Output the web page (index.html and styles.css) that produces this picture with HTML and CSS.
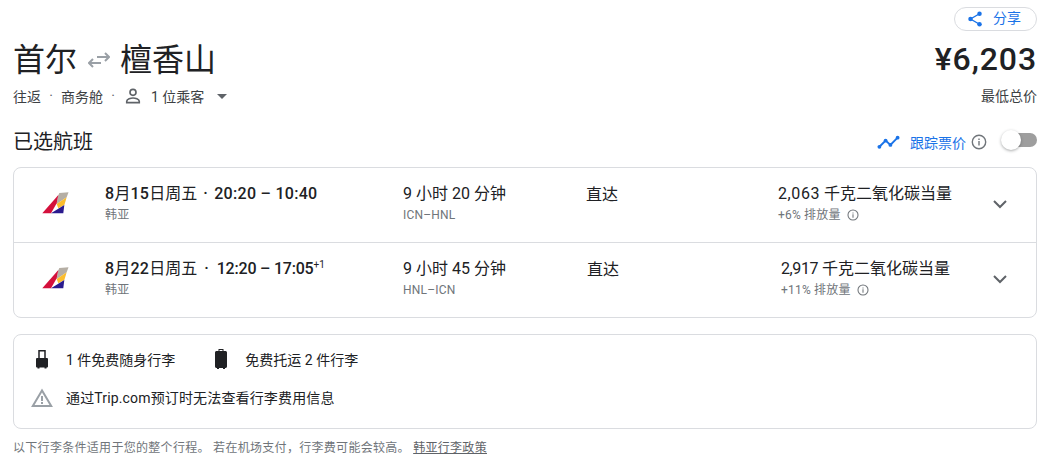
FILE: index.html
```html
<!DOCTYPE html>
<html lang="zh-CN">
<head>
<meta charset="utf-8">
<title>首尔 - 檀香山</title>
<link rel="stylesheet" href="styles.css">
</head>
<body>
<main class="page">
  <div class="share-row">
    <button class="share">
      <svg class="share-icon" viewBox="0 0 24 24" width="18" height="18"><path fill="none" stroke="#1a73e8" stroke-width="1.8" d="M18 5 6 12l12 7"/><circle cx="18" cy="5" r="3" fill="#1a73e8"/><circle cx="6" cy="12" r="3" fill="#1a73e8"/><circle cx="18" cy="19" r="3" fill="#1a73e8"/></svg>
      <span>分享</span>
    </button>
  </div>
  <header class="head">
    <div class="head-left">
      <h1 class="title">
        <span>首尔</span>
        <svg class="swap" viewBox="0 0 22 16" width="22" height="16"><path fill="none" stroke="#9aa0a6" stroke-width="2" d="M9 5h12M17 1l4 4-4 4M13 11H1M5 7l-4 4 4 4"/></svg>
        <span>檀香山</span>
      </h1>
      <div class="meta">
        <span>往返</span><span class="dot">·</span><span>商务舱</span><span class="dot">·</span>
        <svg class="person" viewBox="0 0 24 24" width="20" height="20"><path fill="none" stroke="#5f6368" stroke-width="2" d="M12 4a3.600 3.600 0 1 1 0 7.200A3.600 3.600 0 0 1 12 4ZM4.500 20v-1.600c0-2.600 5-4 7.500-4s7.500 1.400 7.500 4V20Z"/></svg>
        <span class="pax">1 位乘客</span>
        <span class="caret"></span>
      </div>
    </div>
    <div class="head-right">
      <div class="price">¥6,203</div>
      <div class="price-note">最低总价</div>
    </div>
  </header>
  <section class="selected">
    <h2 class="selected-title">已选航班</h2>
    <div class="track">
      <svg class="track-icon" viewBox="0 0 24 14" width="23" height="14"><path fill="none" stroke="#1a73e8" stroke-width="2" d="M2.500 12 9 5.500l5 4.500 7.500-7.500"/><circle cx="2.500" cy="12" r="2" fill="#1a73e8"/><circle cx="9" cy="5.500" r="2" fill="#1a73e8"/><circle cx="14" cy="10" r="2" fill="#1a73e8"/><circle cx="21.500" cy="2.500" r="2" fill="#1a73e8"/></svg>
      <span class="track-label">跟踪票价</span>
      <svg class="info-lg" viewBox="0 0 16 16" width="16" height="16"><circle cx="8" cy="8" r="6.700" fill="none" stroke="#70757a" stroke-width="1.400"/><path fill="#70757a" d="M7.300 7h1.400v4.500H7.300zM7.300 4.500h1.400v1.400H7.300z"/></svg>
      <span class="toggle"><span class="knob"></span></span>
    </div>
  </section>
  <section class="card flights">
    <article class="flight">
      <svg class="tail" viewBox="0 0 27 22" width="27" height="22"><path fill="#b5aea4" d="M17.300 1 26.500.3 24.700 5.300 14.700 12 16 4z"/><path fill="#fbbd2e" d="M24.700 5.300 22.300 13l-6 3.300-1.600-4.300z"/><path fill="#2a1a8e" d="M22.300 13l-1 8.300H9z"/><path fill="#d4103c" d="M.3 21.300 16.300 3l-1.600 8.300L9 21.300z"/></svg>
      <div class="col-time"><div class="main-line"><b class="num">8</b>月<b class="num">15</b>日周五 <span class="sep">·</span> <b class="num clock">20:20 – 10:40</b></div><div class="sub-line">韩亚</div></div>
      <div class="col-dur"><div class="plain-line">9 小时 20 分钟</div><div class="sub-line">ICN–HNL</div></div>
      <div class="col-stop">直达</div>
      <div class="col-co2"><div class="plain-line"><span class="qty">2,063</span> 千克二氧化碳当量</div><div class="sub-line">+6% 排放量 <svg viewBox="0 0 16 16" width="12" height="12"><circle cx="8" cy="8" r="6.700" fill="none" stroke="#70757a" stroke-width="1.400"/><path fill="#70757a" d="M7.300 7h1.400v4.500H7.300zM7.300 4.500h1.400v1.400H7.300z"/></svg></div></div>
      <svg class="chev" viewBox="0 0 16 10" width="16" height="10"><path fill="none" stroke="#5f6368" stroke-width="2" d="M2 2l6 6 6-6"/></svg>
    </article>
    <article class="flight flight-b">
      <svg class="tail" viewBox="0 0 27 22" width="27" height="22"><path fill="#b5aea4" d="M17.300 1 26.500.3 24.700 5.300 14.700 12 16 4z"/><path fill="#fbbd2e" d="M24.700 5.300 22.300 13l-6 3.300-1.600-4.300z"/><path fill="#2a1a8e" d="M22.300 13l-1 8.300H9z"/><path fill="#d4103c" d="M.3 21.300 16.300 3l-1.600 8.300L9 21.300z"/></svg>
      <div class="col-time"><div class="main-line"><b class="num">8</b>月<b class="num">22</b>日周五 <span class="sep">·</span> <b class="num clock">12:20 – 17:05</b><sup class="plus">+1</sup></div><div class="sub-line">韩亚</div></div>
      <div class="col-dur"><div class="plain-line">9 小时 45 分钟</div><div class="sub-line">HNL–ICN</div></div>
      <div class="col-stop">直达</div>
      <div class="col-co2"><div class="plain-line"><span class="qty">2,917</span> 千克二氧化碳当量</div><div class="sub-line">+11% 排放量 <svg viewBox="0 0 16 16" width="12" height="12"><circle cx="8" cy="8" r="6.700" fill="none" stroke="#70757a" stroke-width="1.400"/><path fill="#70757a" d="M7.300 7h1.400v4.500H7.300zM7.300 4.500h1.400v1.400H7.300z"/></svg></div></div>
      <svg class="chev" viewBox="0 0 16 10" width="16" height="10"><path fill="none" stroke="#5f6368" stroke-width="2" d="M2 2l6 6 6-6"/></svg>
    </article>
  </section>
  <section class="card bags">
    <div class="bag-row">
      <span class="bag-item">
        <svg class="bag-icon" viewBox="0 0 14 20" width="14" height="20"><path fill="none" stroke="#202124" stroke-width="1.500" d="M4 10V1.800h6V10"/><path fill="#202124" d="M2 9h10a1 1 0 0 1 1 1v7.500a1 1 0 0 1-1 1h-.5v1h-2v-1h-5v1h-2v-1H2a1 1 0 0 1-1-1V10a1 1 0 0 1 1-1z"/></svg>
        <span>1 件免费随身行李</span>
      </span>
      <span class="bag-item bag-item-b">
        <svg class="bag-icon" viewBox="0 0 14 20" width="14" height="20"><path fill="#202124" d="M4.500 0h5v2h2.200a1.500 1.500 0 0 1 1.300 1.500v14a1.500 1.500 0 0 1-1.300 1.500h-.7v1H9v-1H5v1H3v-1h-.7A1.500 1.500 0 0 1 1 17.500v-14A1.500 1.500 0 0 1 2.300 2h2.200V0zm1 1v1h3V1z"/></svg>
        <span>免费托运 2 件行李</span>
      </span>
    </div>
    <div class="bag-row warn-row">
      <svg class="warn" viewBox="0 0 22 19" width="22" height="19"><path fill="none" stroke="#9aa0a6" stroke-width="2" d="M11 2.500 1.800 18h18.400z"/><path fill="#9aa0a6" d="M10 8h2v5h-2zM10 14h2v2h-2z"/></svg>
      <span class="warn-text">通过Trip.com预订时无法查看行李费用信息</span>
    </div>
  </section>
  <p class="foot">以下行李条件适用于您的整个行程。 若在机场支付，行李费可能会较高。 <a class="foot-link" href="#">韩亚行李政策</a></p>
</main>
</body>
</html>
```
FILE: styles.css
```css
* { box-sizing: border-box; }
html, body { margin: 0; background: #fff; }
body { font-family: Roboto, "Noto Sans CJK SC", sans-serif; color: #202124; overflow: hidden; }
.page { width: 1049px; height: 471px; padding: 7px 12px 0 13px; }

.share-row { display: flex; justify-content: flex-end; height: 24px; }
.share { display: flex; align-items: center; justify-content: flex-end; gap: 9px; width: 83px; height: 24px; padding: 0 15px 2px 0; background: #fff; border: 1px solid #dadce0; border-radius: 12px; color: #1a73e8; font: 14px/20px Roboto, "Noto Sans CJK SC", sans-serif; }
.share-icon { margin-top: 2px; }

.head { display: flex; justify-content: space-between; margin-top: 6px; }
.title { display: flex; align-items: center; height: 46px; margin: 0; font-size: 32px; font-weight: 400; line-height: 46px; }
.swap { margin: 0 10px 0 11px; }
.meta { display: flex; align-items: center; height: 20px; margin-top: 3px; font-size: 14px; color: #3c4043; }
.dot { width: 20px; text-align: center; color: #5f6368; }
.pax { margin-left: 8px; }
.caret { width: 0; height: 0; margin-left: 13px; border: 5px solid transparent; border-top-color: #5f6368; border-bottom-width: 0; }
.head-right { text-align: right; }
.price { height: 46px; margin-top: -1px; font-size: 32px; font-weight: 500; line-height: 46px; letter-spacing: .9px; }
.price-note { height: 20px; margin-top: 4px; font-size: 14px; line-height: 20px; color: #3c4043; }

.selected { display: flex; justify-content: space-between; align-items: center; height: 28px; margin-top: 22px; }
.selected-title { margin: 0; padding-top: 1px; font-size: 20px; font-weight: 400; line-height: 27px; }
.track { display: flex; align-items: center; }
.track-label { margin-left: 10px; font-size: 14px; color: #1a73e8; }
.info-lg { margin-left: 5px; }
.toggle { position: relative; display: block; width: 26px; height: 14px; margin: 0 0 4px 24px; background: #9e9e9e; border-radius: 7px; }
.knob { position: absolute; left: -10px; top: -3px; width: 20px; height: 20px; background: #fff; border-radius: 50%; box-shadow: 0 1px 3px rgba(60,64,67,.45); }

.card { border: 1px solid #dadce0; border-radius: 8px; }
.flights { margin-top: 11px; }
.flight { display: grid; grid-template-columns: 28px 333px 183px 192px 1fr 16px; align-items: start; height: 74px; padding: 16px 28px 0 28px; }
.flight-b { grid-template-columns: 28px 333px 184px 194px 1fr 16px; height: 75px; border-top: 1px solid #dadce0; }
.tail { margin-top: 8px; }
.col-time { margin-left: 35px; }
.chev { grid-column: 6; margin-top: 15px; }
.main-line, .plain-line { font-size: 16px; line-height: 20px; white-space: nowrap; }
.num { font-weight: 500; letter-spacing: .3px; }
.sep { margin: 0 2.500px 0 2px; font-weight: 500; }
.flight-b .sep { margin: 0 4px 0 3px; }
.flight-b .clock { letter-spacing: -.2px; }
.qty { letter-spacing: .6px; }
.flight-b .qty { letter-spacing: -.4px; }
.sub-line { display: flex; align-items: center; gap: 6px; margin-top: 3px; font-size: 12px; line-height: 16px; letter-spacing: .2px; color: #70757a; white-space: nowrap; }
.plus { font-size: 10px; line-height: 0; }
.col-stop { font-size: 16px; line-height: 20px; margin-top: 1px; }

.bags { height: 95px; margin-top: 16px; padding: 13px 0 0 21px; font-size: 14px; }
.bag-row { display: flex; align-items: center; height: 22px; }
.bag-item { display: flex; align-items: center; gap: 17px; }
.bag-item-b { margin-left: 39px; }
.warn-row { gap: 13px; margin: 16px 0 0 -4px; }
.warn-text { letter-spacing: .15px; }

.foot { margin: 11px 0 0; font-size: 12px; line-height: 16px; letter-spacing: .3px; color: #70757a; }
.foot-link { color: #5f6368; text-decoration: underline; }
```
